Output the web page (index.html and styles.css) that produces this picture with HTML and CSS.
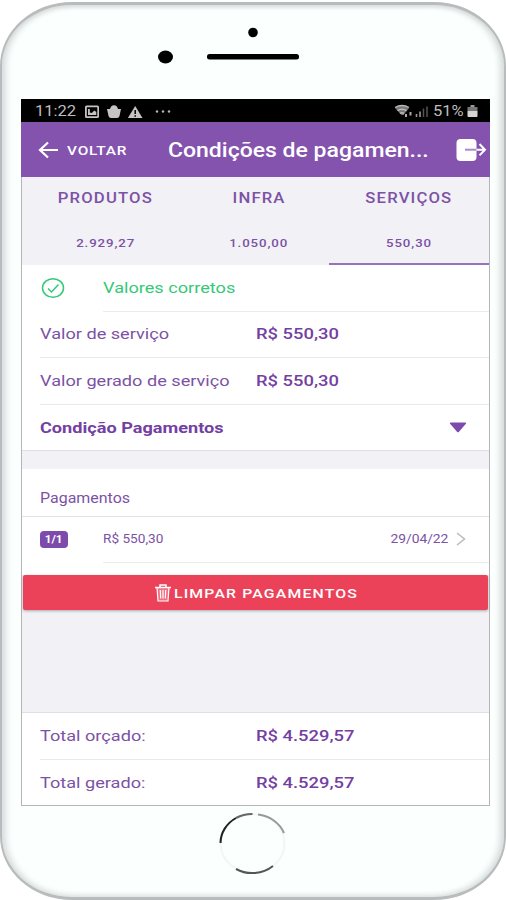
FILE: index.html
```html
<!DOCTYPE html>
<html lang="pt-BR">
<head>
<meta charset="utf-8">
<title>Condições de pagamento</title>
<link rel="stylesheet" href="styles.css">
</head>
<body>
<div class="phone">
  <div class="bezel-top">
    <svg width="506" height="94" viewBox="0 5 506 94">
      <circle cx="253" cy="32.500" r="4.800"/>
      <ellipse cx="165.500" cy="57" rx="7.500" ry="6.500"/>
      <rect x="207" y="54" width="92" height="5.500" rx="2.500"/>
    </svg>
  </div>
  <main class="screen">
    <div class="status">
      <span class="t time">11:22</span>
      <svg class="notif" width="90" height="16" viewBox="84 103 90 16">
        <path fill="#c4c4c4" fill-rule="evenodd" d="M86.500 104.500h11q1.500 0 1.500 1.500v9.500q0 1.500-1.500 1.500h-11q-1.500 0-1.500-1.500v-9.500q0-1.500 1.500-1.500zM86.800 106.200v9h10.500v-9z"/>
        <path fill="#c4c4c4" d="M88 114v-6h1.800v3.500l2 .5 2.500-2.500 2 1.500v3z"/>
        <path fill="#c4c4c4" d="M107 108h3q.8-3.800 4-3.800t4 3.800h3l-1.500 7q-.5 2-2.500 2h-6q-2 0-2.500-2z"/>
        <path fill="#c4c4c4" d="M135.200 105l7.300 12h-14.600z"/>
        <path stroke="#000" stroke-width="1.500" d="M135.200 109v4M135.200 114.300v1.500"/>
        <g fill="#b5b5b5"><circle cx="157" cy="110.500" r="1.200"/><circle cx="163" cy="110.500" r="1.200"/><circle cx="169" cy="110.500" r="1.200"/></g>
      </svg>
      <svg class="signal" width="36" height="16" viewBox="391 103 36 16">
        <path d="M393 107q7-4.500 14 0l-5.500 7h-2z" fill="#777"/>
        <path d="M393 106.500q7-4 14 0M395.500 109.700q4.500-3 9 0M398 112.500q2-1.500 4 0" stroke="#bbb" stroke-width="1.400" fill="none"/>
        <path d="M408.500 111v3.500M404 113v3" stroke="#aaa" stroke-width="2"/>
        <path d="M414.500 113v3M418 110.500v5.500" stroke="#999" stroke-width="1.600"/><path d="M421.500 107.500v8.500M425 105.500v10.500" stroke="#555" stroke-width="1.500"/>
      </svg>
      <span class="t battery">51%</span>
      <svg class="cell" width="11" height="13" viewBox="0 0 11 13"><path d="M3.500 0h4v2h-4z" fill="#999"/><path d="M.5 2h10v4h-10z" fill="#777"/><path d="M.5 6h10v5q0 1-1 1h-8q-1 0-1-1z" fill="#d5d5d5"/></svg>
    </div>
    <header class="bar">
      <svg class="back" width="22" height="18" viewBox="0 0 22 18" fill="none" stroke="#fff" stroke-width="2.200"><path d="M20 9H2.500M10 1.500L2 9l8 7.500"/></svg>
      <span class="t voltar">VOLTAR</span>
      <span class="t title">Condições de pagamen...</span>
      <svg class="exit" width="31" height="24" viewBox="0 0 31 24"><rect x=".5" y="1" width="20" height="22" rx="4" fill="#fff"/><path d="M9 11.700h11.500" stroke="#a98bc8" stroke-width="2"/><path d="M20.500 11.700h8M23.500 6l5.500 5.700-5.500 5.700" fill="none" stroke="#fff" stroke-width="2"/></svg>
    </header>
    <nav class="tabs">
      <div class="tab"><span class="t name">PRODUTOS</span><span class="t amount">2.929,27</span></div>
      <div class="tab"><span class="t name">INFRA</span><span class="t amount">1.050,00</span></div>
      <div class="tab active"><span class="t name">SERVIÇOS</span><span class="t amount">550,30</span></div>
    </nav>
    <section class="list">
      <div class="row">
        <svg class="check" width="24" height="22" viewBox="0 0 24 22" fill="none" stroke="#33c978" stroke-width="1.500"><ellipse cx="12" cy="11" rx="10.500" ry="9.300"/><path d="M7 11.500l3.500 3.500 7-7.500"/></svg>
        <div class="body"><span class="t green">Valores corretos</span></div>
      </div>
      <div class="row line"><span class="label"><span class="t">Valor de serviço</span></span><span class="t value">R$ 550,30</span></div>
      <div class="row line"><span class="label"><span class="t">Valor gerado de serviço</span></span><span class="t value">R$ 550,30</span></div>
      <div class="row line last"><span class="t strong">Condição Pagamentos</span><svg class="caret" width="18" height="11" viewBox="0 0 18 11"><path d="M1.500.500h15q1 .3.400 1.200L10 9.800q-1 1-2 0L1.100 1.700Q.5.800 1.500.500z" fill="#7d4bab"/></svg></div>
    </section>
    <section class="payments">
      <h2><span class="t heading">Pagamentos</span></h2>
      <div class="row"><span class="badge"><span class="t count">1/1</span></span>
        <div class="body"><span class="t small">R$ 550,30</span><span class="t small date">29/04/22</span><svg width="10" height="14" viewBox="0 0 10 14" fill="none" stroke="#b9b9bf" stroke-width="1.500"><path d="M1 1l7.500 6L1 13"/></svg></div>
      </div>
    </section>
    <button class="clear"><svg width="18" height="18" viewBox="0 0 18 18" fill="none" stroke="#fff" stroke-width="1.200"><path d="M1 3.500h16M6 3.500V1h6v2.500" stroke-width="1.500"/><path d="M3 3.500l1 13.500h10l1-13.500z" fill="#fff" fill-opacity=".25"/><path d="M6.300 6l.4 8.500M9 6v8.500M11.700 6l-.4 8.500"/></svg><span class="t clear-text">LIMPAR PAGAMENTOS</span></button>
    <footer class="totals">
      <div class="row line"><span class="label"><span class="t">Total orçado:</span></span><span class="t value">R$ 4.529,57</span></div>
      <div class="row"><span class="label"><span class="t">Total gerado:</span></span><span class="t value">R$ 4.529,57</span></div>
    </footer>
  </main>
  <div class="home">
    <svg width="70" height="66" viewBox="218 811 70 66" fill="none" stroke-width="2">
      <ellipse cx="252.500" cy="843.500" rx="32" ry="29.500" stroke="#f3f6f6"/>
      <path d="M220.500 843A32 29.500 0 0 1 236 818" stroke="#222"/><path d="M236 818A32 29.500 0 0 1 252.500 814" stroke="#666"/><path d="M258 814.500A32 29.500 0 0 1 284 833" stroke="#999"/><path d="M236 869A32 29.500 0 0 0 273 866" stroke="#555"/>
    </svg>
  </div>
</div>
</body>
</html>
```
FILE: styles.css
```css
* { box-sizing: border-box; }
body { margin: 0; background: #fff; font-family: Roboto, "Liberation Sans", sans-serif; color: #7c52a5; overflow: hidden; display: flow-root; }
svg { display: block; flex: none; }

.phone {
  width: 506px; height: 898px; margin-top: 2px;
  background: #fbfffe;
  border: solid #b9bcbc;
  border-width: 3px 2px;
  border-radius: 72px / 64px;
  box-shadow: inset 4px 0 6px #d9dcdc, inset -4px 0 6px #d6dcdb, inset 0 2px 3px #e8eaea;
}
.bezel-top { height: 94px; }
.bezel-top svg { margin-left: -2px; }

/* wide letterforms: every label is stretched horizontally */
.t { display: inline-block; white-space: nowrap; font-size: 15.5px; line-height: 20px; transform: scaleX(1.17); transform-origin: left center; }

.screen {
  width: 469px; height: 707px; margin-left: 19px;
  background: #f2f1f6;
  display: flex; flex-direction: column;
  border: 1px solid #b5b4b8; border-top: 0;
}
.status { height: 23px; margin: 0 -1px; background: #000; color: #bdbdbd; display: flex; align-items: center; padding: 2px 12px 0 14px; }
.time, .battery { font-size: 14.5px; transform: scaleX(1.14); }
.time { width: 49px; }
.signal { margin-left: auto; margin-right: 4px; }
.battery { width: 34px; }

.bar { height: 55px; margin: 0 -1px; background: #8453ae; color: #fff; display: flex; align-items: center; padding: 0 3px 0 17px; }
.voltar { font-size: 13.5px; font-weight: 500; letter-spacing: .7px; transform: scaleX(1.14); margin-left: 7px; width: 101px; }
.title { font-size: 20px; font-weight: 500; transform: scaleX(1.15); }
.exit { margin-left: auto; }

.tabs { height: 88px; display: grid; grid-template-columns: 167px 140px 1fr; }
.tab { display: flex; flex-direction: column; align-items: center; padding-top: 12px; }
.tab .t { transform: scaleX(1.15); transform-origin: center; font-weight: 500; }
.tab.active { border-bottom: 2px solid #9673bb; }
.name { font-size: 14.5px; letter-spacing: 1px; }
.tab .amount { font-size: 11.5px; letter-spacing: .8px; margin-top: 24px; }

.list { height: 186px; background: #fff; border-bottom: 1px solid #dfdee3; margin-bottom: 18px; }
.row { height: 46.5px; margin-left: 18px; display: flex; align-items: center; }
.line { border-bottom: 1px solid #e9e9ed; }
.last { border: 0; }
.label { width: 216px; }
.value { font-weight: 500; color: #7340a2; transform: scaleX(1.185); }
.strong { font-weight: 700; color: #7340a2; }
.green { color: #33c978; }
.check { margin-left: 1px; margin-right: 38px; }
.body { flex: 1; height: 100%; display: flex; align-items: center; border-bottom: 1px solid #ececef; }
.caret { margin: 0 22px 0 auto; }

.payments { height: 106px; background: #fff; }
h2 { margin: 0; height: 47.5px; padding: 16px 0 0 18px; border-bottom: 1px solid #e2e2e6; font-weight: 400; line-height: 20px; }
.heading { font-size: 14px; transform: scaleX(1.14); }
.payments .row { height: 46px; }
.badge { width: 28px; height: 17px; margin-right: 35px; border-radius: 4px; background: #7d4bab; color: #fff; display: flex; justify-content: center; align-items: center; }
.count { font-size: 10px; font-weight: 700; transform-origin: center; }
.small { font-size: 12px; transform: scaleX(1.135); }
.date { margin-left: auto; transform: scaleX(1.15); transform-origin: right; }
.payments .body svg { margin: 0 23px 0 8px; }

.clear {
  height: 35px; margin: 0 1px; padding: 0 0 0 131px;
  border: 0; border-radius: 2px; background: #eb4259; color: #fff; font-family: inherit;
  box-shadow: 0 1px 3px rgba(0,0,0,.3);
  display: flex; align-items: center;
}
.clear-text { font-size: 13.5px; font-weight: 500; letter-spacing: 1px; margin-left: 2px; }

.totals { margin-top: auto; height: 93px; background: #fff; border-top: 1px solid #dfdee3; }

.home { display: flex; margin: 5px 0 0 216px; }
```
